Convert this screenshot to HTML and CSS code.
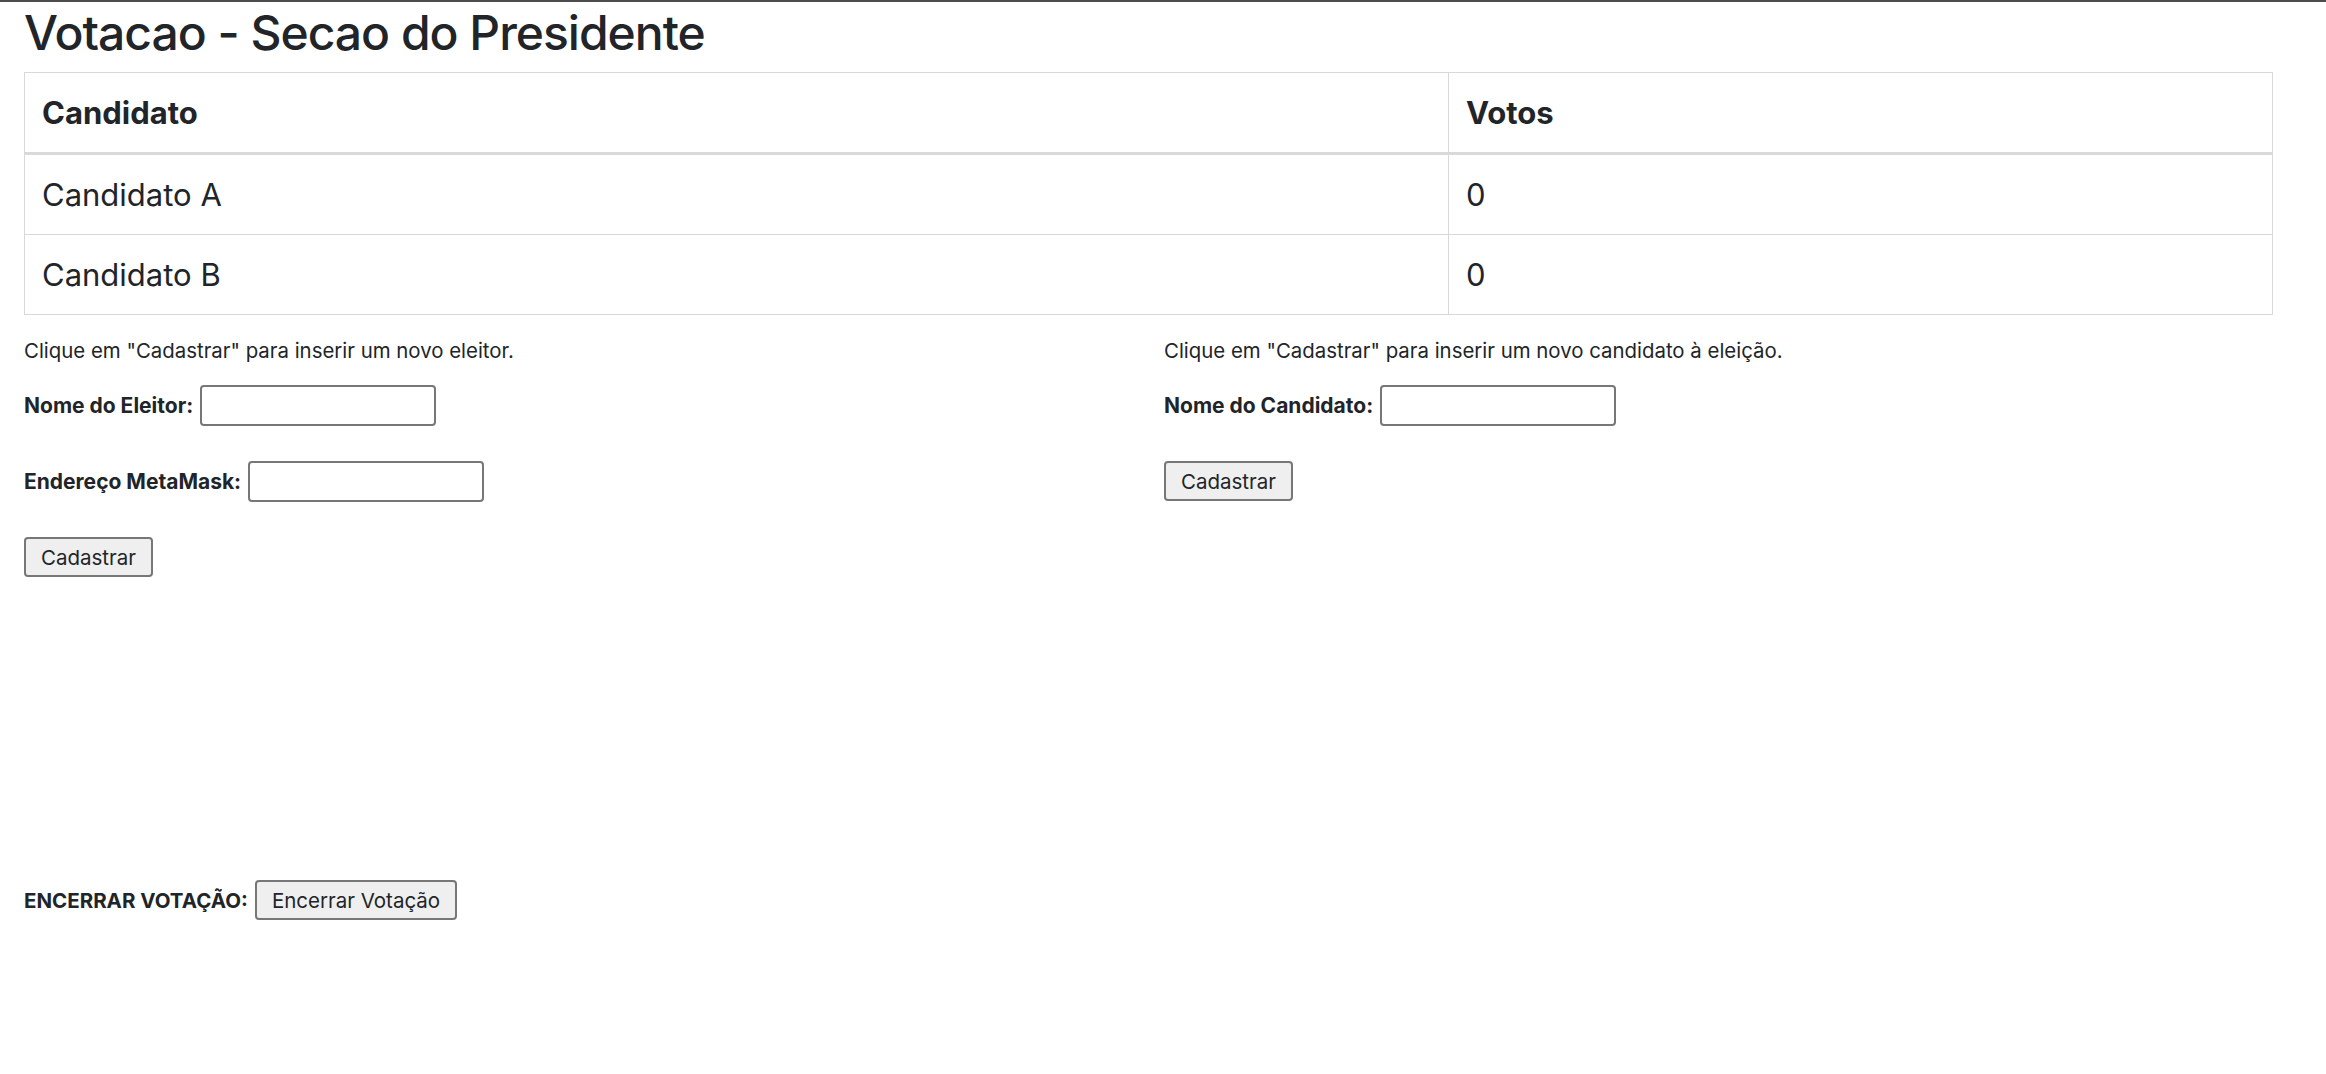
FILE: index.html
```html
<!DOCTYPE html>
<html lang="pt">
<head>
<meta charset="utf-8">
<title>Votacao</title>
<link rel="stylesheet" href="styles.css">
</head>
<body>
<div class="topbar"></div>
<main class="page">
  <h1 class="title">Votacao - Secao do Presidente</h1>
  <table class="results">
    <thead>
      <tr><th class="col-name">Candidato</th><th>Votos</th></tr>
    </thead>
    <tbody>
      <tr><td>Candidato A</td><td>0</td></tr>
      <tr><td>Candidato B</td><td>0</td></tr>
    </tbody>
  </table>
  <section class="forms">
    <div class="form-col">
      <p class="hint">Clique em "Cadastrar" para inserir um novo eleitor.</p>
      <div class="field"><label class="lbl" for="eleitor">Nome do Eleitor:</label><input class="txt" id="eleitor" type="text"></div>
      <div class="field"><label class="lbl" for="meta">Endereço MetaMask:</label><input class="txt" id="meta" type="text"></div>
      <div class="field"><button class="btn" type="button">Cadastrar</button></div>
    </div>
    <div class="form-col">
      <p class="hint">Clique em "Cadastrar" para inserir um novo candidato à eleição.</p>
      <div class="field"><label class="lbl" for="cand">Nome do Candidato:</label><input class="txt" id="cand" type="text"></div>
      <div class="field"><button class="btn" type="button">Cadastrar</button></div>
    </div>
  </section>
  <div class="end-row field">
    <span class="lbl">ENCERRAR VOTAÇÃO:</span><button class="btn" type="button">Encerrar Votação</button>
  </div>
</main>
</body>
</html>
```

FILE: styles.css
```css
html, body {
  margin: 0;
  padding: 0;
  background: #ffffff;
}
body {
  font-family: Inter, "Noto Sans", "Liberation Sans", sans-serif;
  color: #212529;
}
.topbar {
  height: 2px;
  background: #4d4d4d;
}
.page {
  padding: 0 24px;
}
.title {
  margin: 0;
  font-size: 48px;
  font-weight: 500;
  line-height: 1.2;
  letter-spacing: -1px;
  padding-top: 2px;
  height: 68px;
}
.results {
  width: 2249px;
  border-collapse: collapse;
  border: 1px solid #d9d9d9;
  font-size: 31px;
}
.results th, .results td {
  text-align: left;
  padding: 17px 17px;
  line-height: 45px;
  border: 1px solid #d9d9d9;
  vertical-align: top;
}
.results thead th {
  border-bottom: 3px solid #d9d9d9;
  font-weight: 700;
}
.results .col-name {
  width: 1389px;
}
.forms {
  display: grid;
  grid-template-columns: 1140px 1fr;
  margin-top: 21px;
}
.form-col {
  display: flex;
  flex-direction: column;
  align-items: flex-start;
}
.hint {
  margin: 0;
  font-size: 20.4px;
  line-height: 30px;
  height: 31px;
}
.field {
  display: flex;
  align-items: center;
  height: 76px;
  font-size: 21px;
}
.lbl {
  font-weight: 700;
  margin-right: 7px;
}
.txt {
  width: 236px;
  height: 41px;
  box-sizing: border-box;
  border: 2px solid #777;
  border-radius: 4px;
  font: inherit;
  padding: 0 4px;
}
.btn {
  font-family: Inter, "Noto Sans", "Liberation Sans", sans-serif;
  font-size: 20.5px;
  height: 40px;
  padding: 0 15px;
  background: #efefef;
  color: #212529;
  border: 2px solid #777;
  border-radius: 4px;
}
.end-row {
  margin-top: 267px;
  font-size: 20.5px;
}
```
